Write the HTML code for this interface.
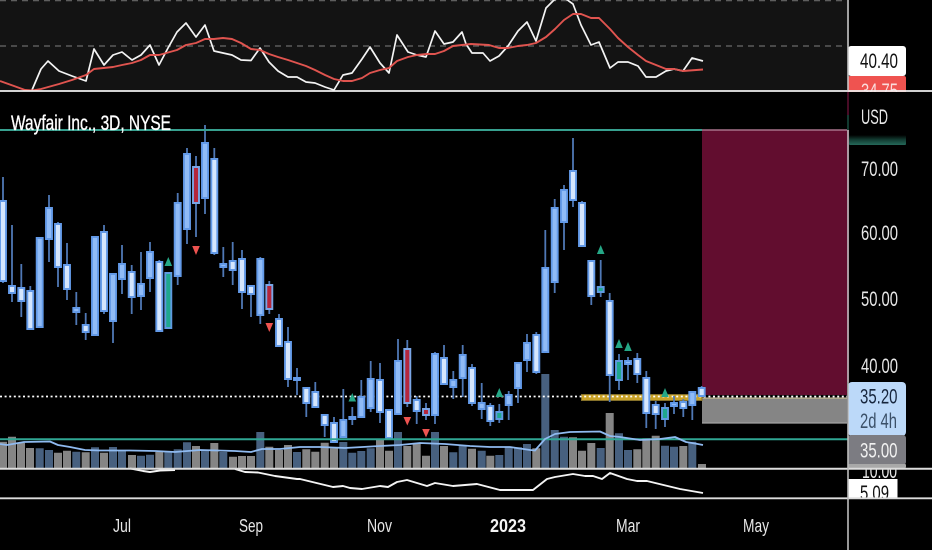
<!DOCTYPE html>
<html lang="en">
<head>
<meta charset="utf-8">
<title>Wayfair Inc., 3D, NYSE</title>
<style>
html,body{margin:0;padding:0;background:#000;width:932px;height:550px;overflow:hidden}
svg{display:block;filter:blur(.35px)}
text{font-family:"Liberation Sans",sans-serif;font-size:21px;fill:#e6e6e6}
</style>
</head>
<body>
<svg xmlns="http://www.w3.org/2000/svg" width="932" height="550" viewBox="0 0 932 550">
<defs>
<linearGradient id="tg" x1="0" y1="0" x2="0" y2="1"><stop offset="0" stop-color="#000"/><stop offset="0.45" stop-color="#123a30"/><stop offset="1" stop-color="#25685a"/></linearGradient>
</defs>
<rect width="932" height="550" fill="#000"/>

<!-- RSI pane -->
<rect x="0" y="0" width="847" height="91" fill="#131313"/>
<path d="M0 .7H847M0 46H847" stroke="#6a6a6a" stroke-width="1.2" stroke-dasharray="6 5" fill="none"/>
<path fill="none" stroke="#f4f4f4" stroke-width="1.7" stroke-linejoin="round" d="M32 90L41 69 48 61 59 71 72 76 86 81 94 49 104 65 113 55 122 52 132 60 141 55 150 45 159 65 168 48 177 32 186 23 196 37 205 25 214 51 223 53 232 55 241 60 251 60.5 260 48 269 62 278 71 288 77 297 77 306 82 315 83 325 87 334 90 343 75 352 73 362 59 370 47 380 63 389 73 397 35 408 52 417 55 426 57 435 31 444 44 453 42 462 32 466 44 472 53 483 53 490 61 499 56 508 46 518 31 527 22 536 41 546 8 554 0 560 -2 566 -1 573 4 581 25 591 45 599 42 610 68 618 62 628 62 638 66 646 77 656 77 666 71 674 69 683 71 692 58 703 61"/>
<path fill="none" stroke="#e0544f" stroke-width="1.9" stroke-linejoin="round" d="M0 81L14 86 25 90 32 90.5 41 89 59 84 72 80 86 75 94 69 113 67 122 65 132 63 141 60 150 55 159 55 177 50 186 45 196 43 205 39 214 39 223 38 232 39 241 43 251 49 260 50 269 54 278 57 288 60 297 63 306 66 315 70 325 75 334 79 343 81 352 81 362 78 370 73 380 70 389 68 397 61 408 57 417 55 427 54 435 54 444 51 453 46 462 45 471 44 489 45 499 48 508 48 518 46 527 45 536 43 546 37 555 29 564 20 573 14 581 14 591 18 599 18 610 29 618 38 628 47 638 55 646 61 656 65 666 69 674 69 683 71 703 69.5"/>

<!-- Position tool zones -->
<rect x="702" y="130" width="145" height="265" fill="#620d2f"/>
<rect x="702" y="399" width="145" height="24" fill="#858585"/>
<path d="M702 423H847" stroke="#a3a3a3" stroke-width="1.2"/>
<path d="M702 398.2H847" stroke="#c9c0a0" stroke-width="1.4"/>

<!-- Volume bars -->
<path fill="none" stroke="#858585" stroke-width="8" d="M3 441.7V468M12 436.7V468M21 442.7V468M30 448V468M58 452.7V468M67 450.7V468M85.7 452.3V468M104 452.7V468M132 455V468M159.3 452V468M196 446V468M214.3 443V468M233 456.7V468M242 456V468M251 456V468M269.3 446.7V468M279 450V468M288 445V468M306.3 449.3V468M315.3 451.7V468M324.7 442.7V468M334 448.3V468M380 439V468M389 450.7V468M407.3 446V468M416.7 443.3V468M426 455.7V468M444 446V468M472 448.7V468M490.3 455.7V468M536.3 448.3V468M573 437.3V468M582 450.7V468M591.3 443V468M609.7 413V468M637.3 449.3V468M646.3 438.3V468M655.7 435.7V468M683.3 446V468M702 464V468"/>
<path fill="none" stroke="#47607f" stroke-width="8" d="M39.7 448.3V468M49 450V468M76.3 451.7V468M95 447.3V468M113 447V468M122 450.7V468M141 455.7V468M150 454.7V468M168.3 451.7V468M177.7 449.3V468M187 442.3V468M205 450.7V468M223.3 452V468M260.3 432V468M297 452V468M343.3 442V468M352.3 452.7V468M361.3 451V468M370.7 448.3V468M398 432V468M435 432V468M453.3 452.3V468M462.7 446V468M481.7 450.7V468M499.3 455V468M508.7 447.3V468M518 447.3V468M527 444V468M545.3 374V468M554.7 430V468M564 436.7V468M600.7 448V468M619 433.3V468M628 450V468M665 445.7V468M674 446.7V468M692.3 441.7V468"/>

<!-- Gold band and dotted last-price line -->
<rect x="581.5" y="394.5" width="120.5" height="6" fill="#c9a227" stroke="#857029" stroke-width="1"/>
<path d="M0 396.5H847" stroke="#ffffff" stroke-width="1.7" stroke-dasharray="2 2.6"/>

<!-- Wicks -->
<path fill="none" stroke="#4f78b5" stroke-width="1.8" d="M3 177V283M12 225V302M21.3 264V317M30.3 286V330M39.7 237V327M49 195V262M58 222V287M67 243V300M76.3 292V325M85.7 313V340M104 225V314M113 273V343M122 245V294M131.7 265V314M141 252V310M150 242V292M159.3 260V331M168.3 273V328M177.7 193V285M187 148V244M196 156V237M205 125V214M214.3 148V255M223.3 247V277M232.7 242V285M242 250V309M251 285V317M260.3 257V324M269.3 281V314M279 314V346M288 327V387M297 368V395M306.3 388V417M315.3 382V407M324.7 414V437M334 417V442M343.3 389V437M352.3 407V425M361.3 380V417M370.7 361V412M380 363V423M398 339V414M407.3 340V407M416.7 396V424M426 403V420M435 352V424M444 345V385M453.3 371V399M462.7 345V397M472 364V406M481.7 383V419M490.3 403V426M499.3 404V423M508.7 391V420M518 363V403M527 334V372M536.3 332V374M545.3 230V353M554.7 199V293M564 185V250M573 138V207M582 201V246M591.3 260V305M600.7 260V297M609.7 293V402M619 354V390M628 357V380M637.3 353V383M646.3 371V428M655.7 401V429M665 403V427M674 396V414M683.3 399V417M692.3 391V420M701.7 386V396"/>

<!-- Light bodies -->
<path fill="#d5e6fd" stroke="#639ae8" stroke-width="1.9" d="M0 201h6V281h-6zM9 286h6V293h-6zM18.3 288h6V301h-6zM27.3 291h6V329h-6zM55 224h6V267h-6zM64 265h6V289h-6zM82.7 325h6V332h-6zM101 232h6V311h-6zM128.7 272h6V297h-6zM156.3 262h6V331h-6zM211.3 159h6V253h-6zM229.7 261h6V270h-6zM239 259h6V292h-6zM248 286h6V294h-6zM276 319h6V346h-6zM285 342h6V379h-6zM303.3 388h6V403h-6zM312.3 392h6V407h-6zM321.7 415h6V425h-6zM331 423h6V442h-6zM377 380h6V412h-6zM386 410h6V438h-6zM413.7 400h6V411h-6zM441 358h6V384h-6zM469 368h6V403h-6zM487.3 406h6V421h-6zM533.3 335h6V372h-6zM570 171h6V200h-6zM579 203h6V246h-6zM588.3 261h6V296h-6zM606.7 301h6V375h-6zM634.3 359h6V374h-6zM643.3 378h6V413h-6zM652.7 405h6V414h-6zM680.3 402h6V408h-6zM698.7 388h6V396h-6z"/>
<!-- Mid bodies -->
<path fill="#90bbf6" stroke="#639ae8" stroke-width="1.9" d="M36.7 238h6V327h-6zM46 208h6V239h-6zM73.3 308h6V312h-6zM92 237h6V335h-6zM110 274h6V321h-6zM119 264h6V279h-6zM138 284h6V296h-6zM147 252h6V278h-6zM174.7 203h6V276h-6zM184 154h6V229h-6zM202 143h6V198h-6zM220.3 264h6V267h-6zM257.3 259h6V315h-6zM294 378h6V380h-6zM340.3 420h6V437h-6zM349.3 417h6V419h-6zM358.3 397h6V417h-6zM367.7 379h6V408h-6zM395 361h6V414h-6zM432 354h6V415h-6zM450.3 380h6V387h-6zM459.7 355h6V378h-6zM478.7 403h6V409h-6zM505.7 395h6V405h-6zM515 363h6V388h-6zM524 343h6V360h-6zM542.3 268h6V352h-6zM551.7 208h6V282h-6zM561 190h6V222h-6zM625 361h6V364h-6zM671 403h6V406h-6zM689.3 392h6V405h-6z"/>
<!-- Teal bodies -->
<path fill="#1fa78e" stroke="#5f9ae0" stroke-width="1.9" d="M165.3 273h6V328h-6zM496.3 412h6V419h-6zM597.7 287h6V292h-6zM616 361h6V380h-6zM662 408h6V419h-6z"/>
<!-- Red bodies -->
<path fill="#b5263c" stroke="#7ba6e6" stroke-width="1.9" d="M193 167h6V203h-6zM266.3 285h6V309h-6zM404.3 349h6V403h-6zM423 409h6V415h-6z"/>
<!-- Triangles -->
<path fill="#25a786" d="M168.3 257l3.8 9h-7.6zM352.3 393l3.8 8.5h-7.6zM499.3 388l3.8 9h-7.6zM600.7 245l3.8 9h-7.6zM619 339l3.8 9h-7.6zM628 342l3.8 9h-7.6zM665 388l3.8 9h-7.6z"/>
<path fill="#ee5350" d="M192.2 246h7.6l-3.8 9zM265.5 323h7.6l-3.8 9zM403.5 417h7.6l-3.8 8.5zM422.2 429h7.6l-3.8 8.5z"/>

<!-- Horizontal levels -->
<path d="M0 130H702" stroke="#37a08f" stroke-width="2"/>
<path d="M702 130H847" stroke="#a8738a" stroke-width="1.4"/>
<path d="M0 439.3H848" stroke="#2fa693" stroke-width="2"/>

<!-- Volume MA -->
<path fill="none" stroke="#8fbaf0" stroke-width="1.8" stroke-linejoin="round" d="M0 444L7 445 24 442 50 441.5 58 445 70 447 85 450 100 450.5 130 450.5 155 451 175 452 200 450 235 451 251 452 262 449 280 449 300 447 320 447 345 448 380 446 400 445 420 443 445 444 470 446 490 447 510 447 530 450 535 450.5 538 447 545 439 555 434 570 432 600 431.5 610 436 620 437 640 440 660 439 675 437 686 442 695 443.5 703 445"/>

<!-- Lower pane -->
<path fill="none" stroke="#f4f4f4" stroke-width="1.9" stroke-linejoin="round" d="M130 468.5L143 471 150 472 160 470.5 175 470M235 469L245 472 258 472.5 275 476 297 479 300 479 333 487 343 486 350 488 362 489 380 486 388 487 397 482 407 480 427 486 435 483 453 486 477 484 500 490 533 490 547 479 555 477 573 474 585 476 593 476 602 479 610 473 627 479 637 481 647 481 680 489 703 493"/>

<!-- Title -->
<text x="11" y="130" textLength="160" lengthAdjust="spacingAndGlyphs" style="fill:#fff;stroke:#fff;stroke-width:.35">Wayfair Inc., 3D, NYSE</text>

<!-- Right axis -->
<rect x="848" y="76" width="58" height="18" rx="2" fill="#ef5350"/>
<text x="861" y="98" textLength="37" lengthAdjust="spacingAndGlyphs" style="fill:#fbdcdc">34.75</text>
<rect x="848" y="92" width="84" height="20" fill="#000"/>
<rect x="848" y="46" width="58" height="30" rx="3" fill="#fff"/>
<text x="860" y="68" textLength="38" lengthAdjust="spacingAndGlyphs" style="fill:#111">40.40</text>
<text x="861" y="124" textLength="27" lengthAdjust="spacingAndGlyphs" style="fill:#e8e8e8">USD</text>
<rect x="849" y="135" width="57" height="10" rx="1" fill="url(#tg)"/>
<text x="861" y="176" textLength="37" lengthAdjust="spacingAndGlyphs">70.00</text>
<text x="861" y="240" textLength="37" lengthAdjust="spacingAndGlyphs">60.00</text>
<text x="861" y="306" textLength="37" lengthAdjust="spacingAndGlyphs">50.00</text>
<text x="861" y="373" textLength="37" lengthAdjust="spacingAndGlyphs">40.00</text>
<text x="862" y="478" textLength="35" lengthAdjust="spacingAndGlyphs">10.00</text>
<rect x="848" y="382" width="58" height="54" rx="4" fill="#bcd9f9"/>
<text x="860" y="403.5" textLength="37.5" lengthAdjust="spacingAndGlyphs" style="fill:#16253c">35.20</text>
<text x="860" y="428" textLength="37" lengthAdjust="spacingAndGlyphs" style="fill:#3b5068">2d 4h</text>
<rect x="848" y="435" width="58" height="30" rx="3" fill="#7c7c82"/>
<rect x="848" y="464" width="58" height="4" rx="1" fill="#a8a8a8"/>
<text x="860" y="457.5" textLength="37.5" lengthAdjust="spacingAndGlyphs" style="fill:#f2f2f2">35.00</text>
<rect x="848" y="479" width="49.5" height="21" fill="#fff"/>
<text x="860" y="500" textLength="29" lengthAdjust="spacingAndGlyphs" style="fill:#111">5.09</text>
<rect x="848" y="499" width="84" height="10" fill="#000"/>

<!-- Pane separators -->
<path d="M0 91H932" stroke="#efefef" stroke-width="1.8"/>
<path d="M0 468.7H932" stroke="#dcdcdc" stroke-width="2"/>
<path d="M0 498.3H932" stroke="#dcdcdc" stroke-width="1.8"/>
<path d="M848 0V90" stroke="#c8c8c8" stroke-width="1.6"/>
<path d="M848 92V115" stroke="#5a1030" stroke-width="1.6"/>
<path d="M848 115V130" stroke="#16483d" stroke-width="1.6"/>
<path d="M848 130V382" stroke="#d8c0cc" stroke-width="1.6"/>
<path d="M848 382V550" stroke="#bdbdbd" stroke-width="1.6"/>

<!-- Time axis -->
<text x="113" y="532" textLength="18" lengthAdjust="spacingAndGlyphs" style="font-size:18px">Jul</text>
<text x="239" y="532" textLength="24" lengthAdjust="spacingAndGlyphs" style="font-size:18px">Sep</text>
<text x="367" y="532" textLength="25" lengthAdjust="spacingAndGlyphs" style="font-size:18px">Nov</text>
<text x="490" y="532" textLength="36" lengthAdjust="spacingAndGlyphs" style="font-size:18px;font-weight:bold;fill:#f4f4f4">2023</text>
<text x="616" y="532" textLength="24" lengthAdjust="spacingAndGlyphs" style="font-size:18px">Mar</text>
<text x="743" y="532" textLength="26" lengthAdjust="spacingAndGlyphs" style="font-size:18px">May</text>
</svg>
</body>
</html>
